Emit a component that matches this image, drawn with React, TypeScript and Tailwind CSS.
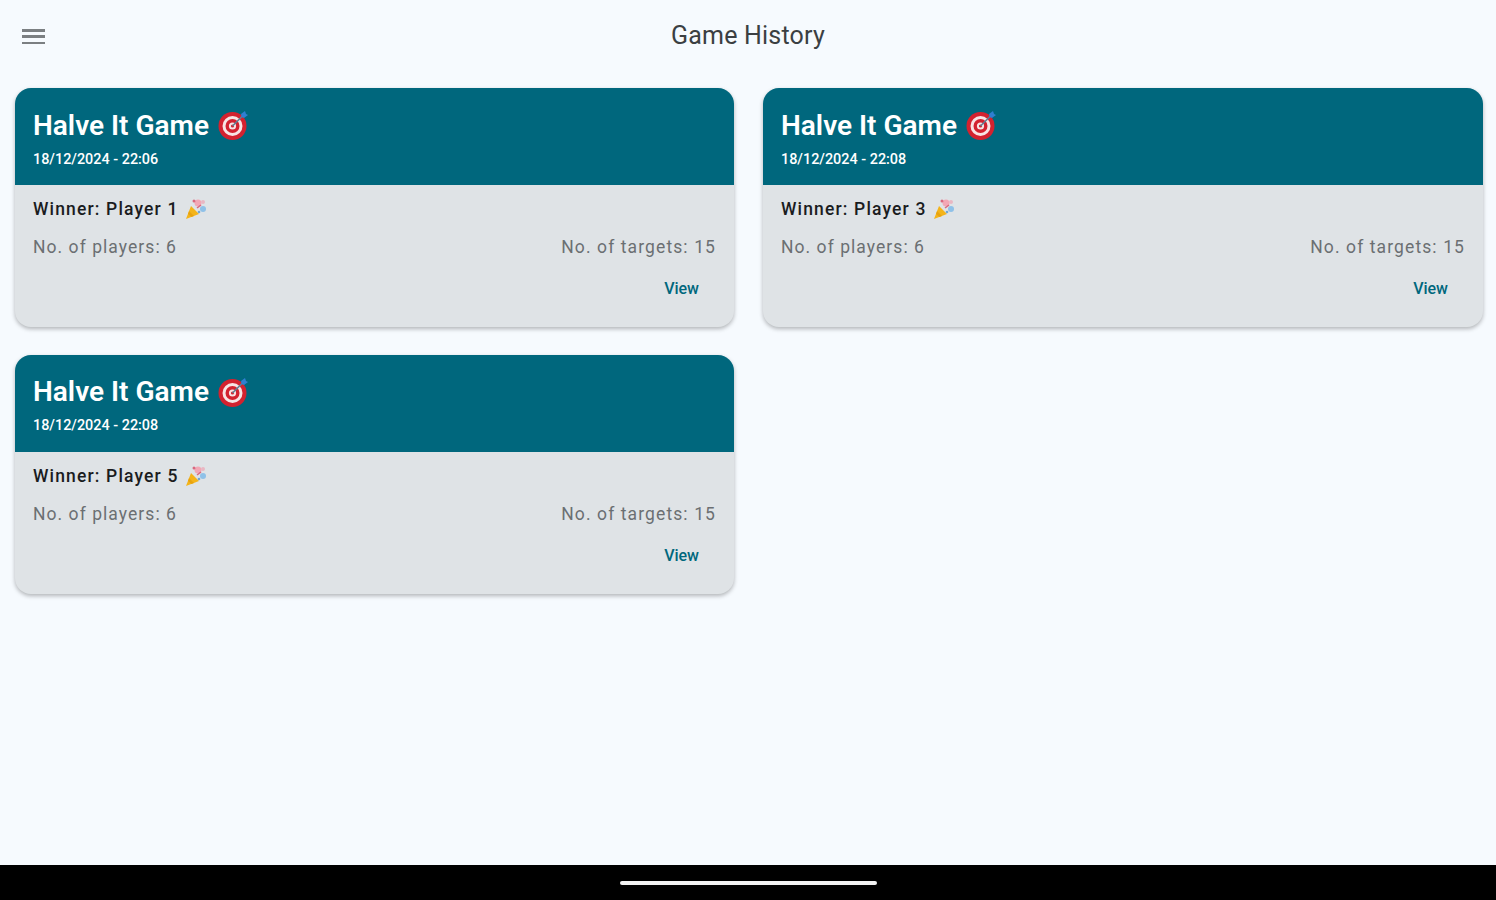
const games = [
  { id: 1, date: '18/12/2024 - 22:06', winner: 'Player 1' },
  { id: 2, date: '18/12/2024 - 22:08', winner: 'Player 3' },
  { id: 3, date: '18/12/2024 - 22:08', winner: 'Player 5' },
]

function TargetIcon() {
  return (
    <svg width="30" height="32" viewBox="0 0 30 32" className="ml-[9px] shrink-0">
      <circle cx="14.5" cy="17" r="14" fill="#d3222f" />
      <circle cx="14.5" cy="17" r="10" fill="#f7e4e4" />
      <circle cx="14.5" cy="17" r="7" fill="#d3222f" />
      <circle cx="14.5" cy="17" r="3.6" fill="#f7e4e4" />
      <circle cx="14.5" cy="17" r="1.6" fill="#d3222f" />
      <path d="M14.5 17L25 6.5" stroke="#5f7f94" strokeWidth="1.6" />
      <path d="M23 5l4-3 1 3 2 1-4 3-2.500-1z" fill="#2f7fd1" />
    </svg>
  )
}

function PartyIcon() {
  return (
    <svg width="22" height="22" viewBox="0 0 22 22" className="ml-[6px] shrink-0">
      <path d="M1 21l5-13 8 8z" fill="#f4b41a" />
      <path d="M4 13l5 5-2.500 1-3.500-3z" fill="#e8a30f" />
      <circle cx="13" cy="5" r="3.500" fill="#f2a7b5" />
      <circle cx="9" cy="3" r="1.500" fill="#d9687f" />
      <circle cx="18" cy="11" r="3" fill="#8fc1e8" />
      <circle cx="18" cy="4" r="2" fill="#e9b7c3" />
      <path d="M12 10l4-3" stroke="#d9687f" strokeWidth="1.500" />
      <circle cx="14" cy="14" r="1.300" fill="#6ea8d8" />
    </svg>
  )
}

function GameCard({ date, winner }: { date: string; winner: string }) {
  return (
    <div className="h-[239px] overflow-hidden rounded-[16px] bg-[#dfe3e6] shadow-[0_2px_4px_rgba(0,0,0,0.28)]">
      <div className="h-[97px] bg-[#00677d] pl-[18px] pt-[18px] text-white">
        <div className="flex h-[38px] items-center">
          <span className="text-[28px] font-semibold leading-[39px]">Halve It Game</span>
          <TargetIcon />
        </div>
        <p className="mt-[5.500px] text-[14.400px] font-medium leading-[20px]">{date}</p>
      </div>
      <div className="px-[18px] pt-[12px]">
        <div className="flex h-[24px] items-center text-[#1a1c1e]">
          <span className="text-[17.500px] font-medium leading-[24px] tracking-[1.15px]">Winner: {winner}</span>
          <PartyIcon />
        </div>
        <div className="mt-[14px] flex items-center justify-between text-[17.500px] leading-[24px] tracking-[1.05px] text-[#6b6f72]">
          <span>No. of players: 6</span>
          <span className="tracking-[1.1px]">No. of targets: 15</span>
        </div>
        <div className="mt-[20px] flex justify-end pr-[17px]">
          <button className="text-[16px] font-medium leading-[20px] text-[#00677d]">View</button>
        </div>
      </div>
    </div>
  )
}

export default function App() {
  return (
    <div className="flex h-[900px] flex-col bg-[#f6fafe] font-['Roboto',sans-serif]">
      <header className="relative flex h-[72px] shrink-0 items-center justify-center">
        <button className="absolute left-[22px] top-[29px] flex h-[15px] w-[23px] flex-col justify-between">
          <span className="h-[2.500px] w-full bg-[#7b7f82]" />
          <span className="h-[2.500px] w-full bg-[#7b7f82]" />
          <span className="h-[2.500px] w-full bg-[#7b7f82]" />
        </button>
        <h1 className="text-[25px] leading-[32px] tracking-[0.2px] text-[#3b3f42]">Game History</h1>
      </header>

      <main className="mt-[16px] grid flex-1 grid-cols-[719px_720px] content-start gap-x-[29px] gap-y-[27.500px] pl-[15px]">
        {games.map((game) => (
          <GameCard key={game.id} date={game.date} winner={game.winner} />
        ))}
      </main>

      <div className="flex h-[35px] shrink-0 items-start justify-center bg-black pt-[16px]">
        <div className="h-[4px] w-[257px] rounded-full bg-[#f2f2f2]" />
      </div>
    </div>
  )
}
